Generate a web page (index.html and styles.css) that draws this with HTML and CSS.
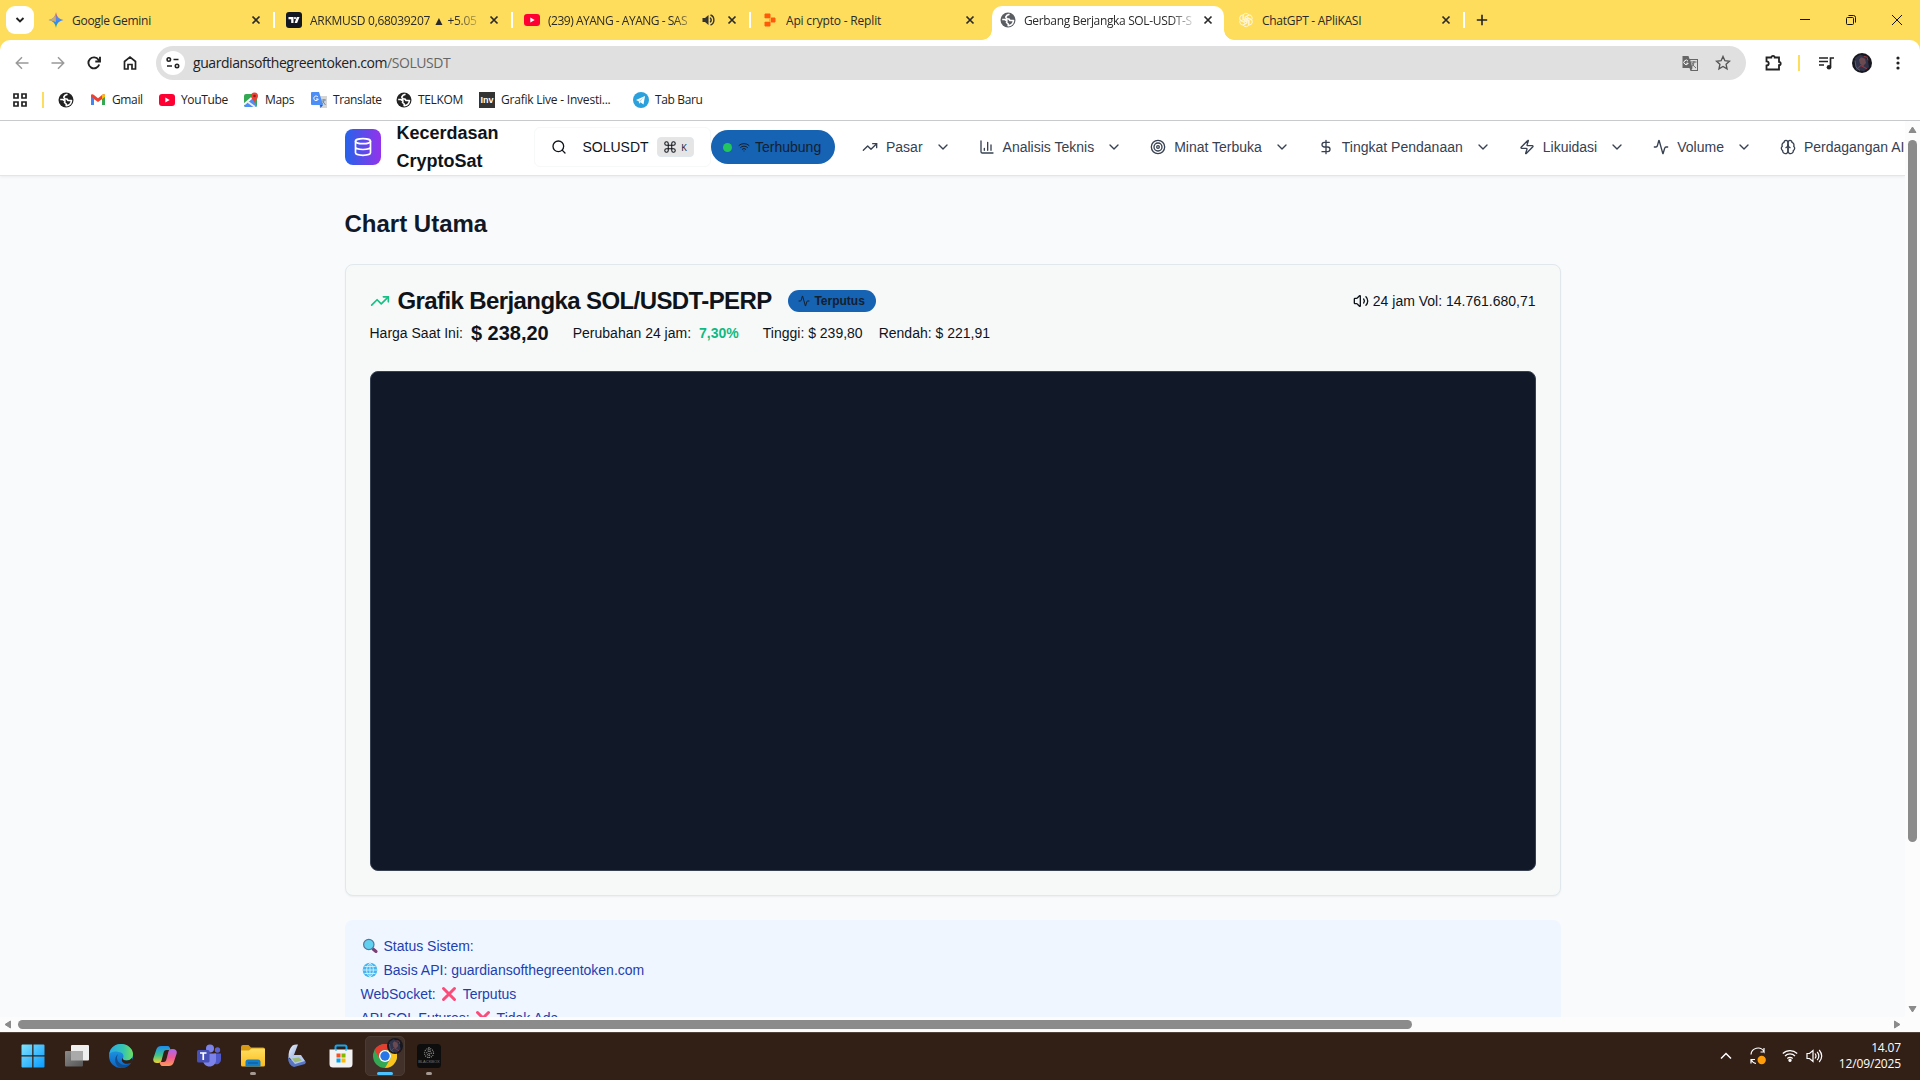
FILE: index.html
```html
<!DOCTYPE html>
<html lang="id">
<head>
<meta charset="utf-8">
<title>Gerbang Berjangka SOL-USDT</title>
<link rel="stylesheet" href="styles.css">
</head>
<body>
<svg class="defs" width="0" height="0">
  <defs>
    <linearGradient id="gem2" x1="0" y1="0" x2="0" y2="1"><stop offset="0" stop-color="#f0524f"/><stop offset=".45" stop-color="#4d8df6"/><stop offset=".6" stop-color="#3186ff"/><stop offset="1" stop-color="#25b15c"/></linearGradient>
    <linearGradient id="win" x1="0" y1="0" x2="1" y2="1"><stop offset="0" stop-color="#7fe3fb"/><stop offset="1" stop-color="#079aff"/></linearGradient>
    <linearGradient id="edge1" x1="0" y1="0" x2="1" y2="0"><stop offset="0" stop-color="#2aa9e8"/><stop offset=".6" stop-color="#35c6b0"/><stop offset="1" stop-color="#72e05a"/></linearGradient>
    <linearGradient id="edge2" x1="0" y1="0" x2="0" y2="1"><stop offset="0" stop-color="#25a5e8"/><stop offset="1" stop-color="#0b63c4"/></linearGradient>
    <linearGradient id="cop1" x1="0" y1="0" x2="0" y2="1"><stop offset="0" stop-color="#1c8df0"/><stop offset=".55" stop-color="#3ec48a"/><stop offset="1" stop-color="#f4d22c"/></linearGradient>
    <linearGradient id="cop2" x1="0" y1="0" x2="0" y2="1"><stop offset="0" stop-color="#a866f2"/><stop offset=".5" stop-color="#ee5a97"/><stop offset="1" stop-color="#ff9a54"/></linearGradient>
    <linearGradient id="fold" x1="0" y1="0" x2="0" y2="1"><stop offset="0" stop-color="#ffdf62"/><stop offset="1" stop-color="#fcbb1c"/></linearGradient>
    <linearGradient id="scan" x1="0" y1="0" x2="1" y2="1"><stop offset="0" stop-color="#f2f6fc"/><stop offset="1" stop-color="#8ea9dd"/></linearGradient>
    <linearGradient id="grey" x1="0" y1="0" x2="1" y2="1"><stop offset="0" stop-color="#8b8b8b"/><stop offset="1" stop-color="#555"/></linearGradient>
  </defs>
  <symbol id="x" viewBox="0 0 10 10"><path d="M1.500 1.500l7 7M8.500 1.500l-7 7" stroke="currentColor" stroke-width="1.700" fill="none"/></symbol>
  <symbol id="globe" viewBox="0 0 16 16"><circle cx="8" cy="8" r="7.500" fill="currentColor"/><path d="M9.500 2.200L7 3.200 5.800 5 7 7h2l1 1.500h3.500c-.3 2.800-2.500 5-5.300 5.100V12l-1.700-1.500.5-1.500-2-1.500H2.200" fill="none" stroke="#fff" stroke-width="1.600" stroke-linejoin="round"/></symbol>
  <symbol id="yt" viewBox="0 0 16 14"><rect width="16" height="12" y="1" rx="3" fill="#ff0033"/><path d="M6.300 4.500v5L10.700 7z" fill="#fff"/></symbol>
  <symbol id="chev" viewBox="0 0 24 24"><path d="m6 9 6 6 6-6"/></symbol>
  <symbol id="trend" viewBox="0 0 24 24"><path d="m22 7-8.500 8.500-5-5L2 17"/><path d="M16 7h6v6"/></symbol>
  <symbol id="pulse" viewBox="0 0 24 24"><path d="M22 12h-2.500a2 2 0 0 0-1.900 1.500l-2.400 8.300a.25.25 0 0 1-.48 0L9.200 2.200a.25.25 0 0 0-.48 0l-2.300 8.400A2 2 0 0 1 4.500 12H2"/></symbol>
  <symbol id="cross" viewBox="0 0 16 16"><path d="M2.500 2.500l11 11M13.500 2.500l-11 11" stroke="#fb4b78" stroke-width="3" stroke-linecap="round"/></symbol>
  <symbol id="face" viewBox="0 0 20 24"><ellipse cx="10" cy="12" rx="10" ry="12" fill="#17171f"/><path d="M3 6l5-4 5 2 3 6 1 7-5 5-8-2z" fill="#30334a"/><path d="M7 8l2-3 4 2 1 5-3 4-3-3z" fill="#6b4a52"/><path d="M12 4l3 1 1 4M6 18l3-3 6 4" stroke="#8c3b44" stroke-width="1.200" fill="none"/><path d="M3 9l1 8 4 4" stroke="#59647f" fill="none"/></symbol>
</svg>

<header class="tabstrip">
  <button class="tab-search"><svg width="10" height="8" viewBox="0 0 10 8"><path d="M1.500 2l3.500 3.500L8.500 2" fill="none" stroke="#222" stroke-width="1.900"/></svg></button>
  <div class="tab sep"><svg width="16" height="16" viewBox="0 0 16 16"><path d="M8 0c.7 4.500 3 7.200 7.500 8C11 8.800 8.700 11.500 8 16 7.300 11.500 5 8.800.500 8 5 7.200 7.300 4.500 8 0z" fill="url(#gem2)"/><path d="M.500 8C5 7.200 7 5 7.600 2L8 10z" fill="#f6b63d" opacity=".75"/></svg><span class="tab-title">Google Gemini</span><svg class="close"><use href="#x"/></svg></div>
  <div class="tab sep"><svg width="16" height="16" viewBox="0 0 16 16"><rect width="16" height="16" rx="3" fill="#131722"/><path d="M2.500 5h5v6H5.200V7.300H2.500zM10.800 5h2.700l-2.400 6H8.600z" fill="#fff"/><circle cx="9" cy="6.100" r="1.100" fill="#fff"/></svg><span class="tab-title fade">ARKMUSD 0,68039207 ▲ +5.05</span><svg class="close"><use href="#x"/></svg></div>
  <div class="tab sep"><svg width="16" height="14"><use href="#yt"/></svg><span class="tab-title t3 fade">(239) AYANG - AYANG - SAS</span><svg class="sound" width="13" height="12" viewBox="0 0 13 12"><path d="M.500 4v4H3l3.500 3V1L3 4z" fill="#333"/><path d="M8.200 3.600q2 2.400 0 4.800M8.500 1c4.500 1.500 4.500 8.500 0 10" fill="none" stroke="#333" stroke-width="1.400"/></svg><svg class="close"><use href="#x"/></svg></div>
  <div class="tab"><svg width="16" height="16" viewBox="0 0 16 16"><path d="M3 2h5v4H3zM8 6h5v4H8zM3 10h5v4H3z" fill="#ff5a0a" stroke="#ff5a0a" stroke-linejoin="round"/><path d="M8.500 5.500v5M3 6.800h5M3 9.200h5" stroke="#ffdd5c" stroke-width=".6"/></svg><span class="tab-title t4">Api crypto - Replit</span><svg class="close"><use href="#x"/></svg></div>
  <div class="tab active"><svg class="grey" width="16" height="16"><use href="#globe"/></svg><span class="tab-title t5 fade">Gerbang Berjangka SOL-USDT-S</span><svg class="close"><use href="#x"/></svg></div>
  <div class="tab sep"><svg width="16" height="16" viewBox="0 0 16 16" fill="none" stroke="#fff6d8" stroke-width="1"><path d="M5 8V4.200a3 3 0 0 1 5.800-1L7 5.500V10"/><path d="M5 8V4.200a3 3 0 0 1 5.800-1L7 5.500V10" transform="rotate(60 8 8)"/><path d="M5 8V4.200a3 3 0 0 1 5.800-1L7 5.500V10" transform="rotate(120 8 8)"/><path d="M5 8V4.200a3 3 0 0 1 5.800-1L7 5.500V10" transform="rotate(180 8 8)"/><path d="M5 8V4.200a3 3 0 0 1 5.800-1L7 5.500V10" transform="rotate(240 8 8)"/><path d="M5 8V4.200a3 3 0 0 1 5.800-1L7 5.500V10" transform="rotate(300 8 8)"/></svg><span class="tab-title">ChatGPT - APliKASI</span><svg class="close"><use href="#x"/></svg></div>
  <svg class="plus" width="12" height="12" viewBox="0 0 12 12"><path d="M6 .8v10.400M.8 6h10.400" stroke="#222" stroke-width="1.600"/></svg>
  <div class="window-buttons">
    <svg width="10" height="10" viewBox="0 0 10 10"><path d="M0 4.500h10" stroke="#111"/></svg>
    <svg width="10" height="10" viewBox="0 0 10 10" fill="none" stroke="#111"><rect x=".5" y="2.500" width="7" height="7" rx="1"/><path d="M2.500.500h5a2 2 0 0 1 2 2v5"/></svg>
    <svg width="10" height="10" viewBox="0 0 10 10"><path d="M0 0l10 10M10 0L0 10" stroke="#111"/></svg>
  </div>
</header>

<div class="toolbar-back">
<div class="toolbar">
  <div class="nav-buttons">
    <svg width="14" height="14" viewBox="0 0 14 14" stroke="#999"><path d="M13.500 7H1.500M7 1.300L1.300 7 7 12.700"/></svg>
    <svg width="14" height="14" viewBox="0 0 14 14" stroke="#999"><path d="M.500 7h12M7 1.300L12.700 7 7 12.700"/></svg>
    <svg width="14" height="14" viewBox="0 0 14 14" stroke="#222" stroke-width="1.900"><path d="M12.200 8.500A5.500 5.500 0 1 1 11.500 3.800L13 5.300M13 .8v4.700H8.300"/></svg>
    <svg width="14" height="14" viewBox="0 0 14 14" stroke="#222" stroke-width="1.700"><path d="M1.500 5.500L7 1.200l5.500 4.300V13H9V8.500H5V13H1.500z"/></svg>
  </div>
  <div class="address">
    <span class="tune"><svg width="14" height="12" viewBox="0 0 14 12" fill="none" stroke="#222" stroke-width="1.600"><circle cx="2.800" cy="2.500" r="1.700"/><path d="M7.500 2.500h5M1 9h5"/><circle cx="11" cy="9" r="1.700"/></svg></span>
    <span class="url">guardiansofthegreentoken.com<i>/SOLUSDT</i></span>
    <svg width="17" height="17" viewBox="0 0 17 17"><path d="M.500 1h6l1 3H16v12H8.500l-1-3h-7z" fill="#666"/><path d="M8.300 5H15v10H9.500l1-2z" fill="#dedede"/><path d="M9 7h5.500M12 6c0 3-1 5-2.500 6M10 8c1 2 2 3.500 4 5" fill="none" stroke="#666"/><path d="M6 6.200a2.200 2.200 0 1 0 .2 2H4.300" fill="none" stroke="#fff"/></svg>
    <svg class="star" width="16" height="16" viewBox="0 0 16 16"><path d="M8 1.500l1.900 4.200 4.600.5-3.400 3.100.9 4.500-4-2.300-4 2.300.9-4.500L1.500 6.200l4.600-.5z" fill="none" stroke="#555" stroke-width="1.400"/></svg>
  </div>
  <div class="tools">
    <svg width="18" height="18" viewBox="0 0 18 18"><path d="M2.500 3.500h4.800a1.700 1.700 0 0 1 3.400 0h4.300v4.300a1.700 1.700 0 0 1 0 3.400v4.300h-12.500v-4c3-.2 3-4 0-4.200z" fill="none" stroke="#222" stroke-width="1.800"/></svg>
    <b class="yellow-bar"></b>
    <svg class="media" width="16" height="14" viewBox="0 0 16 14"><path d="M1 2h9M1 5.500h9M1 9h5M12.500 11V2H16" stroke="#222" stroke-width="1.700" fill="none"/><circle cx="11" cy="11.200" r="2.300" fill="#222"/></svg>
    <svg class="avatar" width="20" height="20" viewBox="0 0 20 24" preserveAspectRatio="none"><use href="#face" width="20" height="24"/></svg>
    <svg class="dots" width="4" height="16" viewBox="0 0 4 16" fill="#222"><circle cx="2" cy="3" r="1.600"/><circle cx="2" cy="8" r="1.600"/><circle cx="2" cy="13" r="1.600"/></svg>
  </div>
</div>
</div>

<nav class="bookmarks">
  <svg class="apps" width="14" height="14" viewBox="0 0 14 14" fill="none" stroke="#222" stroke-width="1.700"><path d="M1 1h4v4H1zM9 1h4v4H9zM1 9h4v4H1zM9 9h4v4H9z"/></svg>
  <b class="yellow-bar"></b>
  <a class="bm"><svg width="16" height="16"><use href="#globe"/></svg></a>
  <a class="bm"><svg width="16" height="16" viewBox="0 0 16 16"><path d="M1 3v10h3V7z" fill="#4285f4"/><path d="M15 3v10h-3V7z" fill="#34a853"/><path d="M1 3.500C1 2 3 2 4 3l4 3.200V10L1 5z" fill="#ea4335"/><path d="M15 3.500C15 2 13 2 12 3L8 6.200V10l7-5z" fill="#ea4335"/><path d="M12 3c1-1 3-1 3 .5V5l-3 2z" fill="#fbbc04"/></svg><span>Gmail</span></a>
  <a class="bm"><svg width="16" height="14"><use href="#yt"/></svg><span>YouTube</span></a>
  <a class="bm"><svg width="16" height="16" viewBox="0 0 16 16"><rect x="1" y="2" width="13" height="13" rx="2" fill="#34a853"/><path d="M1 13L9 6l5 8q-.5 1-2 1H3q-2 0-2-2z" fill="#4c8df6"/><path d="M1 12.500L12 3" stroke="#fff" stroke-width="2"/><path d="M5 10l7 5" stroke="#eee" stroke-width="2"/><path d="M11.500 11C11 8 8 7 8 4a3.500 3.500 0 0 1 7 0c0 3-3 4-3.500 7z" fill="#ea4335"/><circle cx="11.500" cy="4" r="1.300" fill="#8c1d18"/></svg><span>Maps</span></a>
  <a class="bm"><svg width="16" height="16" viewBox="0 0 16 16"><path d="M6 4h10v12H9z" fill="#d5d5d5"/><path d="M0 1q0-1 1-1h7l4 13H1q-1 0-1-1z" fill="#4c8df6"/><path d="M9 13h3l-2.500 3z" fill="#2559c4"/><path d="M7 5a2.300 2.300 0 1 0 .3 2H5" fill="none" stroke="#fff"/><path d="M10.500 8H15M13 7c0 3-1 4-2 5M11.500 9l3 4" fill="none" stroke="#6a8cae"/></svg><span>Translate</span></a>
  <a class="bm"><svg width="16" height="16"><use href="#globe"/></svg><span>TELKOM</span></a>
  <a class="bm"><span class="inv">Inv</span><span class="graf">Grafik Live - Investi...</span></a>
  <a class="bm"><svg width="16" height="16" viewBox="0 0 16 16"><circle cx="8" cy="8" r="8" fill="#2aa1dc"/><path d="M3 8l9-4-1.500 8.500-3-2.200-1.300 1.500-.5-2.600z" fill="#fff"/><path d="M6 9l5-4-3.800 4.700" fill="#a9d3ea"/></svg><span>Tab Baru</span></a>
</nav>

<div class="viewport">
  <div class="page">
    <div class="site-header">
      <div class="logo"><svg class="lu" width="20" height="20" viewBox="0 0 24 24"><ellipse cx="12" cy="5" rx="9" ry="3"/><path d="M3 5v14a9 3 0 0 0 18 0V5M3 12a9 3 0 0 0 18 0"/></svg></div>
      <div class="brand">Kecerdasan CryptoSat</div>
      <div class="search"><svg class="lu" width="16" height="16" viewBox="0 0 24 24"><circle cx="11" cy="11" r="8"/><path d="m21 21-4.300-4.300"/></svg><span>SOLUSDT</span><kbd><svg class="lu" width="14" height="14" viewBox="0 0 24 24"><path d="M15 6v12a3 3 0 1 0 3-3H6a3 3 0 1 0 3 3V6a3 3 0 1 0-3 3h12a3 3 0 1 0-3-3"/></svg><em>K</em></kbd></div>
      <div class="connected"><b></b><svg class="lu" width="12" height="12" viewBox="0 0 24 24"><path d="M12 20h.01M2 8.800a15 15 0 0 1 20 0M5 12.900a10 10 0 0 1 14 0M8.500 16.400a5 5 0 0 1 7 0"/></svg><span>Terhubung</span></div>
      <div class="menu">
        <a><svg class="lu"><use href="#trend"/></svg><span>Pasar</span><svg class="lu arrow"><use href="#chev"/></svg></a>
        <a><svg class="lu" viewBox="0 0 24 24"><path d="M3 3v16a2 2 0 0 0 2 2h16M18 17V9M13 17V5M8 17v-3"/></svg><span>Analisis Teknis</span><svg class="lu arrow"><use href="#chev"/></svg></a>
        <a><svg class="lu" viewBox="0 0 24 24"><circle cx="12" cy="12" r="10"/><circle cx="12" cy="12" r="6"/><circle cx="12" cy="12" r="2"/></svg><span>Minat Terbuka</span><svg class="lu arrow"><use href="#chev"/></svg></a>
        <a><svg class="lu" viewBox="0 0 24 24"><path d="M12 2v20M17 5H9.500a3.500 3.500 0 0 0 0 7h5a3.500 3.500 0 0 1 0 7H6"/></svg><span>Tingkat Pendanaan</span><svg class="lu arrow"><use href="#chev"/></svg></a>
        <a><svg class="lu" viewBox="0 0 24 24"><path d="M4 14a1 1 0 0 1-.78-1.630l9.900-10.200a.5.5 0 0 1 .86.460l-1.920 6.020A1 1 0 0 0 13 10h7a1 1 0 0 1 .78 1.630l-9.900 10.200a.5.5 0 0 1-.86-.46l1.920-6.020A1 1 0 0 0 11 14z"/></svg><span>Likuidasi</span><svg class="lu arrow"><use href="#chev"/></svg></a>
        <a><svg class="lu"><use href="#pulse"/></svg><span>Volume</span><svg class="lu arrow"><use href="#chev"/></svg></a>
        <a><svg class="lu" viewBox="0 0 24 24"><path d="M12 5a3 3 0 1 0-5.997.125 4 4 0 0 0-2.526 5.770 4 4 0 0 0 .556 6.588A4 4 0 1 0 12 18Z"/><path d="M12 5a3 3 0 1 1 5.997.125 4 4 0 0 1 2.526 5.770 4 4 0 0 1-.556 6.588A4 4 0 1 1 12 18Z"/><path d="M15 13a4.500 4.500 0 0 1-3-4 4.500 4.500 0 0 1-3 4"/></svg><span>Perdagangan AI</span></a>
      </div>
    </div>
    <main>
      <h1>Chart Utama</h1>
      <section class="card">
        <div class="card-top">
          <div class="heading"><svg class="lu green" width="20" height="20"><use href="#trend"/></svg><h2>Grafik Berjangka SOL/USDT-PERP</h2><span class="badge"><svg class="lu" width="12" height="12"><use href="#pulse"/></svg>Terputus</span></div>
          <div class="vol"><svg class="lu" width="16" height="16" viewBox="0 0 24 24"><path d="M11 4.700a.7.7 0 0 0-1.200-.5L6.400 7.600A1.400 1.400 0 0 1 5.400 8H3a1 1 0 0 0-1 1v6a1 1 0 0 0 1 1h2.400a1.400 1.400 0 0 1 1 .4l3.400 3.400a.7.7 0 0 0 1.200-.5zM16 9a5 5 0 0 1 0 6M19.400 18.400a9 9 0 0 0 0-12.800"/></svg>24 jam Vol: 14.761.680,71</div>
        </div>
        <div class="stats"><span>Harga Saat Ini:</span><strong>$ 238,20</strong><span class="change">Perubahan 24 jam:</span><b>7,30%</b><span class="high">Tinggi: $ 239,80</span><span class="low">Rendah: $ 221,91</span></div>
        <div class="chart"></div>
      </section>
      <section class="status">
        <p><svg width="16" height="16" viewBox="0 0 16 16"><path d="M11 11l3 2.500" stroke="#7b3f74" stroke-width="3" stroke-linecap="round"/><circle cx="6.800" cy="6.500" r="5.200" fill="#5fd0f0" stroke="#56749c" stroke-width="1.200"/></svg>Status Sistem:</p>
        <p><svg width="16" height="16" viewBox="0 0 16 16"><circle cx="8" cy="8" r="7.300" fill="#45b5f2"/><path d="M1 8h14M8 1v14M2.500 4.500h11M2.500 11.500h11M8 1C3.500 4 3.500 12 8 15M8 1c4.500 3 4.500 11 0 14" fill="none" stroke="#d3f2fd" stroke-width=".9"/></svg>Basis API: guardiansofthegreentoken.com</p>
        <p>WebSocket: <svg class="mid" width="16" height="16"><use href="#cross"/></svg>Terputus</p>
        <p>API SOL Futures: <svg class="mid" width="16" height="16"><use href="#cross"/></svg>Tidak Ada</p>
      </section>
    </main>
  </div>
  <div class="vscroll"><svg width="9" height="8" viewBox="0 0 9 8"><path d="M4.500 1L8 6.500H1z"/></svg><b></b><svg width="9" height="8" viewBox="0 0 9 8"><path d="M4.500 7L8 1.500H1z"/></svg></div>
  <div class="hscroll"><svg width="8" height="9" viewBox="0 0 8 9"><path d="M1 4.500L6.500 1v7z"/></svg><b></b><svg width="8" height="9" viewBox="0 0 8 9"><path d="M7 4.500L1.500 1v7z"/></svg></div>
</div>

<footer class="taskbar">
  <div class="task-apps">
    <span><svg viewBox="0 0 24 24" width="24" height="24" fill="url(#win)"><path d="M.500 1.500q0-1 1-1h9.700v10.700H.500zM12.500.500h10q1 0 1 1v9.700h-11zM.500 12.500h10.700v11H1.500q-1 0-1-1zM12.500 12.500h11v10q0 1-1 1h-10z"/></svg></span>
    <span><svg viewBox="0 0 24 24" width="24" height="24"><rect x="6" y="1" width="18" height="15.500" rx="1" fill="#efefef"/><rect y="7" width="18" height="15.500" rx="1" fill="url(#grey)"/><path d="M6 7h12v9.500H6z" fill="#aaa"/></svg></span>
    <span><svg viewBox="0 0 24 24" width="24" height="24"><circle cx="12" cy="12" r="12" fill="url(#edge2)"/><path d="M.2 10C1.500 3 6.500 0 12 0c7 0 12 5 12 10 0 4-3 6.500-6.500 6.500-3 0-4.200-1.500-3.400-2.800C15.600 11 13 8 9.500 8 5.500 7 2 8 .2 10z" fill="url(#edge1)"/><path d="M9 10c-3 5 1 11 7 11 3 0 5-1.300 6.500-2.500C20 22.500 16 24 12.500 24 6 23 4 14 9 10z" fill="#124f91"/><path d="M14.100 13.700c-.8 1.300.4 2.800 3.400 2.800 2.300 0 4.200-.8 5.400-2.500l.8 1.500-1.200 3q-2.500 1.800-6 1.200c-4-1-4.600-4.500-2.400-6z" fill="#321f16"/></svg></span>
    <span><svg viewBox="0 0 24 24" width="24" height="24"><path d="M8 2h6.500c2 0 2.500 2 3 4h-4c-2 0-2.500 1-3 3L8.700 16c-.5 2-1.500 3-3.500 3H4c-3 0-4.500-2-3.500-5l3-9C4.300 3 6 2 8 2z" fill="url(#cop1)"/><path d="M16 22H9.500c-2 0-2.500-2-3-4h4c2 0 2.500-1 3-3l1.800-7c.5-2 1.500-3 3.500-3h1.200c3 0 4.500 2 3.500 5l-3 9c-.8 2-2.500 3-4.500 3z" fill="url(#cop2)"/><path d="M11 9.500q.6-2.500 2.500-2.500h1.500L12.500 15q-.6 2-2 2H9z" fill="#321f17"/></svg></span>
    <span><svg viewBox="0 0 24 24" width="24" height="24"><circle cx="20.500" cy="6" r="2.700" fill="#5b62d0"/><circle cx="13" cy="4.500" r="4" fill="#7b83eb"/><path d="M17 9.500h7V15c0 4-3 6-6 5z" fill="#5059c9"/><path d="M6 9.500h13V16c0 4-3 6.500-6.500 6.500S6 20 6 16z" fill="#7b83eb"/><rect y="6" width="12.500" height="12.500" rx="1.500" fill="#4750b5"/><path d="M3 9h6.500M6.250 9v7" stroke="#fff" stroke-width="1.700"/></svg></span>
    <span class="open"><svg viewBox="0 0 24 24" width="24" height="24"><path d="M0 3q0-2 2-2h5.500L10 3.500h12q2 0 2 2V12H0z" fill="#d89a13"/><path d="M0 6.500h8l2.500-2H23q1 0 1 1V21q0 1.500-1.500 1.500h-21Q0 22.500 0 21z" fill="url(#fold)"/><path d="M4.500 22.500V18q0-2.500 2.500-2.500h10q2.500 0 2.500 2.500v4.500z" fill="#147fc6"/><path d="M7 19h10" stroke="#0c5ba0" stroke-width="1.200"/></svg></span>
    <span><svg viewBox="0 0 24 24" width="24" height="24"><path d="M3 13l3 3 12-1 3 3-1 2-11 3q-6-2-6-10z" fill="#5876c4"/><path d="M7.500 1.500Q10 0 13 .500L8.500 12l-5 2Q3 6 7.500 1.500z" fill="url(#scan)"/><path d="M4 13l5-2 7 0 4 6-10 3z" fill="#b6c9ef"/><path d="M7 14.500l7-1 3 3-7 2z" fill="#9dbb72"/></svg></span>
    <span><svg viewBox="0 0 24 24" width="24" height="24"><path d="M6.500 7V3q0-1.500 1.500-1.500h8q1.500 0 1.500 1.500v4" fill="none" stroke="#16a6ed" stroke-width="2"/><path d="M.500 5.500h23V20q0 3.500-3.500 3.500H4Q.500 23.500.500 20z" fill="#f2f2f2"/><path d="M6 5.500h2v1H6zM16 5.500h2v1h-2z" fill="#16a6ed"/><path d="M7.500 9.500h4v4h-4z" fill="#f25022"/><path d="M12.500 9.500h4v4h-4z" fill="#7fba00"/><path d="M7.500 14.500h4v4h-4z" fill="#00a4ef"/><path d="M12.500 14.500h4v4h-4z" fill="#ffb900"/></svg></span>
    <span class="open current"><svg viewBox="0 0 24 24" width="24" height="24"><circle cx="12" cy="12" r="12" fill="#34a853"/><path d="M1.600 6A12 12 0 0 1 22.400 6H12a6 6 0 0 0-5.200 9z" fill="#e43e30"/><path d="M22.400 6A12 12 0 0 1 12 24l5.200-9A6 6 0 0 0 12 6z" fill="#fcc31e"/><circle cx="12" cy="12" r="6" fill="#fff"/><circle cx="12" cy="12" r="4.700" fill="#2876e8"/></svg><svg class="profile" width="16" height="16" viewBox="0 0 20 24" preserveAspectRatio="none"><use href="#face" width="20" height="24"/></svg></span>
    <span class="open"><svg viewBox="0 0 24 24" width="24" height="24"><rect width="24" height="24" rx="3.500" fill="#0d0d0e"/><g fill="none" stroke="#8a8a8a" stroke-width="1.200" stroke-dasharray="1 1"><circle cx="12" cy="9" r="4.500"/><circle cx="12" cy="9" r="2.200"/><path d="M12 3v12"/></g><text x="12" y="19" text-anchor="middle" class="tiny">BLACKBOX</text></svg></span>
  </div>
  <div class="tray">
    <svg width="12" height="8" viewBox="0 0 12 8"><path d="M1 6.500l5-5 5 5" stroke-width="1.500"/></svg>
    <svg class="sync" width="18" height="18" viewBox="0 0 18 18"><path d="M2 7.500A7 7 0 0 1 15 4.500V1M15.500 5h-4M7 16.500A7 7 0 0 1 2 12.500M2 16.500v-4h4"/><circle cx="12.700" cy="13" r="4.200" fill="#ff9c0a" stroke="none"/></svg>
    <svg class="wifi" width="16" height="13" viewBox="0 0 16 13"><path d="M.8 4.500a10.300 10.300 0 0 1 14.400 0M3 7a7 7 0 0 1 10 0M5.300 9.500a4 4 0 0 1 5.400 0"/><circle cx="8" cy="11.300" r="1.100" fill="#fff"/></svg>
    <svg class="speaker" width="17" height="14" viewBox="0 0 17 14"><path d="M1 4.500v5h2.500L7 12.500v-11L3.500 4.500zM9 4.500q2 2.500 0 5M11.200 2.800q3.300 4.200 0 8.400M13.200 1q5 6 0 12"/></svg>
    <div class="clock">14.07<br>12/09/2025</div>
  </div>
</footer>
</body>
</html>
```
FILE: styles.css
```css
* { box-sizing: border-box; }
body { margin: 0; width: 1920px; height: 1080px; overflow: hidden; display: flex; flex-direction: column; background: #fff; font-family: "Liberation Sans", Arial, sans-serif; color: #0f1419; }
svg { display: block; flex: none; }
.defs { position: absolute; }
.lu { fill: none; stroke: currentColor; stroke-width: 2; stroke-linecap: round; stroke-linejoin: round; }

/* browser tabs */
.tabstrip { height: 40px; flex: none; display: flex; align-items: center; background: #ffdd5c; padding-left: 6px; font: 12px "Open Sans", "Noto Sans", sans-serif; color: #2a2a2a; }
.tab-search { width: 28px; height: 28px; margin-right: 3px; padding: 0; border: 0; border-radius: 9px; background: #fff; display: flex; align-items: center; justify-content: center; }
.tab { position: relative; width: 238px; height: 40px; padding: 0 14px 0 11px; display: flex; align-items: center; gap: 8px; flex: none; }
.tab.sep { background: linear-gradient(#fff, #fff) right 0 top 12px / 2px 16px no-repeat; }
.tab-title { flex: 1; min-width: 0; white-space: nowrap; overflow: hidden; letter-spacing: -.28px; }
.fade { -webkit-mask-image: linear-gradient(90deg, #000 86%, transparent 103%); margin-right: 2px; }
.t3 { margin-right: 0; letter-spacing: -.48px; }
.t4 { letter-spacing: -.18px; }
.t5 { letter-spacing: -.35px; }
.close { width: 10px; height: 10px; }
.sound { margin-right: 4px; }
.grey { color: #5a5d62; }
.tab.active { z-index: 1; }
.tab.active::before { content: ""; position: absolute; z-index: -1; left: -7px; right: -7px; top: 6px; bottom: 0;
  background: radial-gradient(circle at 0 0, transparent 9.500px, #fff 10px) left bottom / 10px 10px no-repeat, radial-gradient(circle at 100% 0, transparent 9.500px, #fff 10px) right bottom / 10px 10px no-repeat; }
.tab.active::after { content: ""; position: absolute; z-index: -2; left: 3px; right: 3px; top: 6px; bottom: 0; background: #fff; border-radius: 10px 10px 0 0; }
.plus { margin-left: 11px; }
.window-buttons { margin-left: auto; padding-right: 18px; display: flex; gap: 36px; }

/* toolbar */
.toolbar-back { background: #ffdd5c; }
.toolbar { height: 44px; border-radius: 10px 10px 0 0; background: #fff; display: flex; padding-top: 2px; align-items: center; }
.nav-buttons { display: flex; gap: 22px; padding-left: 15px; width: 156px; stroke-width: 1.500px; }
.nav-buttons svg { fill: none; }
.address { width: 1590px; height: 34px; border-radius: 17px; background: #e0e0e0; display: flex; align-items: center; padding: 0 15px 0 5px; }
.tune { width: 24px; height: 24px; border-radius: 50%; background: #fff; display: flex; align-items: center; justify-content: center; }
.url { flex: 1; margin: -1px 0 0 8px; font: 14px "Open Sans", "Noto Sans", sans-serif; letter-spacing: -.43px; color: #222; }
.url i { font-style: normal; color: #666; }
.star { margin-left: 16px; }
.tools { flex: 1; display: flex; align-items: center; padding-left: 18px; }
.yellow-bar { width: 2px; height: 16px; background: #ffdd5c; }
.tools .yellow-bar { margin-left: 16px; }
.media { margin-left: 18px; }
.avatar { margin-left: 18px; }
.dots { margin-left: 24px; }
.bookmarks { height: 37px; flex: none; border-bottom: 1px solid #c9cacc; display: grid; grid-template-columns: 29px 16px 32px 69px 84px 68px 85px 83px 154px 80px; align-items: center; padding: 0 0 4px 13px; font: 12px "Open Sans", "Noto Sans", sans-serif; letter-spacing: -.36px; color: #222; }
.bm { display: flex; align-items: center; gap: 6px; white-space: nowrap; }
.bm span:last-child { margin-top: -1px; }
.graf { letter-spacing: -.22px; }
.inv { width: 16px; height: 16px; background: #333; color: #fff; font: bold 9px/16px "Liberation Sans", Arial, sans-serif; text-align: center; letter-spacing: 0; }

/* web page */
.viewport { height: 911px; flex: none; display: grid; grid-template: 896px 15px / 1905px 15px; background: #fcfcfc; }
.page { overflow: hidden; background: #f9fafc; }
.site-header { height: 55px; background: #fff; border-bottom: 1px solid #e2e5ea; box-shadow: 0 1px 3px rgba(0,0,0,.06); padding: 0 0 2px 345px; display: flex; align-items: center; white-space: nowrap; }
.logo { width: 36px; height: 36px; border-radius: 8px; background: linear-gradient(90deg, #2563eb, #9333ea); color: #fff; display: flex; align-items: center; justify-content: center; flex: none; }
.brand { width: 121px; margin: 0 16px 0 15.500px; padding-right: 10px; font-weight: bold; font-size: 18px; line-height: 28px; white-space: normal; flex: none; }
.search { width: 177px; height: 40px; flex: none; border: 1px solid #f7f8f8; border-radius: 6px; padding-left: 16px; display: flex; align-items: center; font-size: 14px; }
.search > span { margin: 0 8px 0 16px; }
kbd { width: 37px; height: 20px; border: 1px solid #e1e8ed; border-radius: 4px; background: #e5e5e6; display: flex; align-items: center; justify-content: center; gap: 4px; font-family: "Open Sans", sans-serif; }
kbd .lu { stroke-width: 1.800; }
kbd em { font-style: normal; font-size: 9px; }
.connected { width: 124px; height: 34px; flex: none; background: #1662b3; border-radius: 17px; display: flex; align-items: center; padding-left: 12px; font-size: 14px; color: #14202e; }
.connected b { width: 9px; height: 9px; border-radius: 50%; background: #22c55e; margin-right: 6px; }
.connected span { margin-left: 5.500px; }
.menu { margin-left: 27.500px; display: flex; gap: 28px; color: #374151; font-size: 14px; }
.menu a { display: flex; align-items: center; flex: none; }
.menu svg { width: 16px; height: 16px; margin-right: 8px; }
.menu .arrow { margin: 0 0 0 12px; }
main { width: 1216px; margin-left: 344.500px; }
h1 { margin: 31px 0 24px; font-size: 24px; line-height: 33px; color: #111827; }
.card { height: 632px; border: 1px solid #e1e8ed; border-radius: 8px; background: #f7f9f9; box-shadow: 0 1px 2px rgba(0,0,0,.05); padding: 20px 24px 24px; }
.card-top { display: flex; justify-content: space-between; align-items: center; height: 32px; }
.heading, .vol { display: flex; align-items: center; }
h2 { margin: 0 16px 0 8px; font-size: 24px; line-height: 32px; letter-spacing: -.6px; }
.green { color: #17bf84; }
.badge { width: 88px; height: 22px; border-radius: 11px; background: #1662b3; display: flex; align-items: center; justify-content: center; gap: 4px; font-size: 12px; font-weight: bold; color: #14202e; }
.vol { gap: 4px; font-size: 14px; }
.stats { display: flex; align-items: center; height: 28px; margin-top: 2px; font-size: 14px; white-space: nowrap; }
.stats strong { font-size: 20px; margin-left: 8px; }
.change { margin-left: 24px; }
.stats b { margin-left: 8px; color: #10b981; }
.high { margin-left: 24px; }
.low { margin-left: 16px; }
.chart { height: 500px; margin-top: 24px; border-radius: 8px; border: 1px solid #374151; background: #111827; }
.status { height: 130px; margin-top: 24px; border-radius: 8px; background: #eff6ff; padding: 14px 16px; color: #1e40af; font-size: 14px; }
.status p { height: 24px; margin: 0; display: flex; align-items: center; white-space: pre; }
.status svg { margin: 0 6px 0 1px; }
.status .mid { margin: 0 5.500px 0 1.500px; }
.vscroll { padding: 5px 0 4px 3px; display: flex; flex-direction: column; fill: #8b8b8b; stroke: #8b8b8b; stroke-linejoin: round; }
.vscroll b { width: 9px; height: 702px; margin-top: 6px; border-radius: 5px; background: #8b8b8b; }
.vscroll svg:last-child { margin-top: auto; }
.hscroll { padding: 0 4px; display: flex; align-items: center; fill: #8b8b8b; stroke: #8b8b8b; stroke-linejoin: round; grid-column: 1; }
.hscroll b { width: 1394px; height: 9px; margin-left: 6px; border-radius: 5px; background: #8b8b8b; }
.hscroll svg:last-child { margin-left: auto; }

/* taskbar */
.taskbar { height: 48px; flex: none; background: #321f16; border-top: 1px solid #51423a; display: flex; justify-content: space-between; color: #fff; }
.task-apps { display: flex; padding-left: 11px; }
.task-apps span { position: relative; width: 44px; height: 47px; padding-bottom: 1px; display: flex; align-items: center; justify-content: center; }
.open::after { content: ""; position: absolute; bottom: 5px; width: 6px; height: 3px; border-radius: 2px; background: #a59993; }
.current::before { content: ""; position: absolute; inset: 3px 2px 4px; border-radius: 5px; border: 1px solid #4a3b33; background: #41312a; z-index: 0; }
.current svg { z-index: 1; }
.current::after { width: 16px; background: #4cc2ff; z-index: 1; }
.task-apps .profile { position: absolute; top: 5px; right: 4px; }
.tiny { font: 4px "Liberation Sans", Arial, sans-serif; fill: #777; }
.tray { display: flex; align-items: center; padding: 0 19px 2px 0; }
.tray svg { fill: none; stroke: #fff; stroke-width: 1.200px; }
.sync { margin-left: 17px; }
.wifi { margin-left: 15px; }
.speaker { margin-left: 8px; }
.clock { width: 78px; text-align: right; font: 12px/16px "Open Sans", "Noto Sans", sans-serif; letter-spacing: -.15px; }
```
